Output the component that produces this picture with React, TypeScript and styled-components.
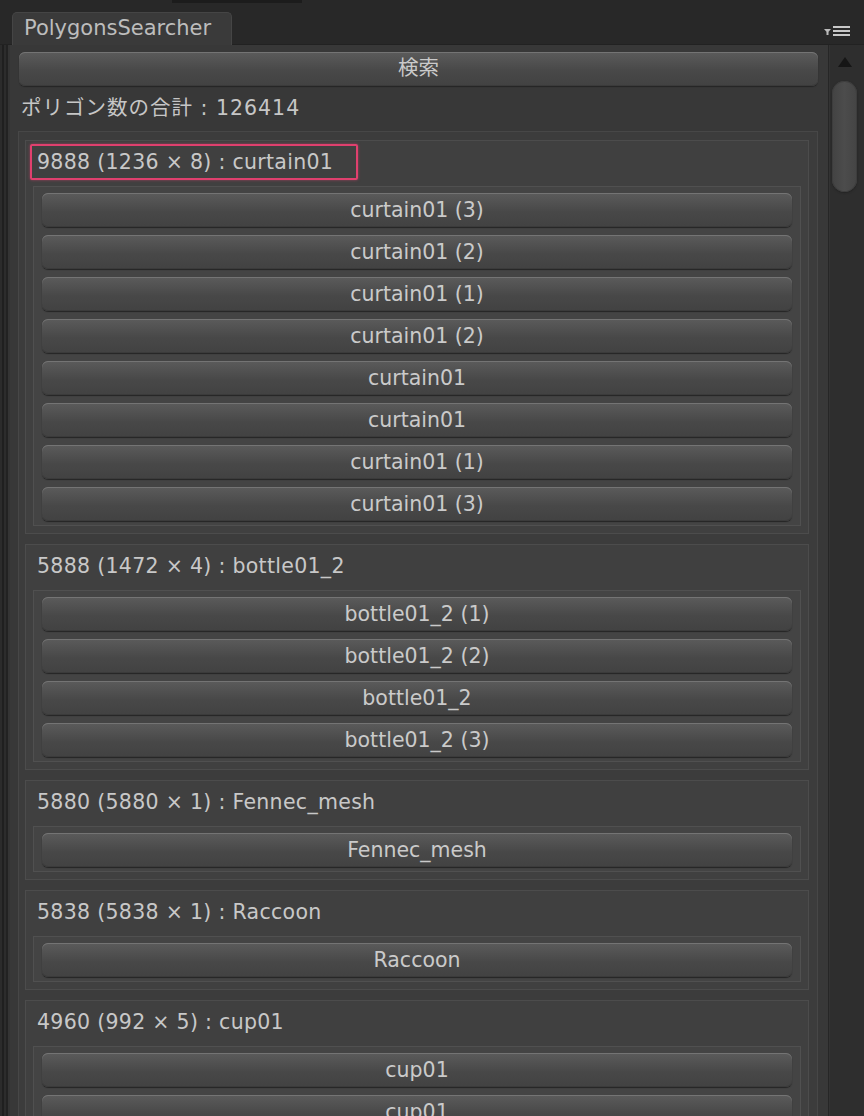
import React from 'react';
import styled, { createGlobalStyle } from 'styled-components';

const GlobalStyle = createGlobalStyle`
  html, body {
    margin: 0;
    padding: 0;
    background: #282828;
  }
  body {
    font-family: "DejaVu Sans", "Noto Sans CJK JP", sans-serif;
  }
`;

const Window = styled.div`
  width: 864px;
  height: 1116px;
  overflow: hidden;
  display: flex;
  flex-direction: column;
  background: #282828;
  color: #c6c6c6;
  font-size: 20.5px;
`;

const TabBar = styled.div`
  height: 45px;
  flex: none;
  display: flex;
  align-items: flex-end;
  padding-left: 12px;
  padding-right: 12px;
  position: relative;
  box-shadow: inset 0 -1px 0 #222;
`;

const TopNotch = styled.div`
  position: absolute;
  left: 172px;
  top: 0;
  width: 130px;
  height: 3px;
  background: #1c1c1c;
`;

const Tab = styled.div`
  height: 33px;
  width: 220px;
  box-sizing: border-box;
  padding: 3px 0 0 11px;
  background: #3a3a3a;
  border: 1px solid #454545;
  border-bottom: none;
  border-radius: 5px 5px 0 0;
  font-size: 21px;
  color: #bdbdbd;
  white-space: nowrap;
`;

const MenuIcon = styled.svg`
  margin-left: auto;
  margin-bottom: 8px;
`;

const Body = styled.div`
  flex: 1;
  display: flex;
  min-height: 0;
`;

const LeftEdge = styled.div`
  width: 10px;
  flex: none;
  background: linear-gradient(
    to right,
    #2b2b2b 0 2px,
    #1f1f1f 2px 4px,
    #2c2c2c 4px 6px,
    #222 6px 8px,
    #343434 8px 10px
  );
`;

const Main = styled.div`
  flex: 1;
  background: #383838;
  padding: 7px 10px 0 9px;
  display: flex;
  flex-direction: column;
  min-width: 0;
`;

const Button = styled.div<{ $lift?: number }>`
  height: 34px;
  box-sizing: border-box;
  padding-bottom: ${p => p.$lift ?? 0}px;
  border-radius: 6px;
  background: linear-gradient(#5b5b5b, #484848 55%, #424242);
  box-shadow: inset 0 1px 0 #747474, inset 0 -1px 0 #3b3b3b, 0 1px 1px #252525;
  display: flex;
  align-items: center;
  justify-content: center;
  color: #cacaca;
  font-size: 20.5px;
  flex: none;
  white-space: nowrap;
`;

const TotalLabel = styled.div`
  margin: 7px 0 0 2px;
  height: 30px;
  line-height: 30px;
  letter-spacing: 1px;
  white-space: nowrap;
`;

const ScrollContent = styled.div`
  margin-top: 8px;
  margin-left: -1px;
  flex: 1;
  background: #3c3c3c;
  border: 1px solid #474747;
  border-bottom: none;
  padding: 8px 8px 0 6px;
  display: flex;
  flex-direction: column;
  gap: 10px;
`;

const Group = styled.div`
  background: #404040;
  border: 1px solid #4c4c4c;
  padding: 3px 7px 7px 7px;
  display: flex;
  flex-direction: column;
  flex: none;
`;

const Title = styled.div<{ $highlight?: boolean }>`
  height: 36px;
  box-sizing: border-box;
  align-self: flex-start;
  margin-left: -3px;
  padding: 0 23px 0 5px;
  display: flex;
  align-items: center;
  border: 2px solid ${p => (p.$highlight ? '#e0406e' : 'transparent')};
  border-radius: 2px;
  box-shadow: ${p => (p.$highlight ? '0 0 3px rgba(224,64,110,0.6)' : 'none')};
  color: #c8c8c8;
  letter-spacing: 0.3px;
  white-space: nowrap;
`;

const ButtonList = styled.div`
  margin-top: 6px;
  background: #444;
  border: 1px solid #505050;
  padding: 6px 8px 4px 8px;
  display: flex;
  flex-direction: column;
  gap: 8px;
`;

const Scrollbar = styled.div`
  width: 36px;
  flex: none;
  background: #2e2e2e;
  box-shadow: inset 1px 0 0 #262626, inset 2px 0 0 #333;
  display: flex;
  flex-direction: column;
  align-items: center;
  padding-top: 8px;
  box-sizing: border-box;
`;

const ArrowUp = styled.div`
  width: 0;
  height: 0;
  border-left: 7px solid transparent;
  border-right: 7px solid transparent;
  border-bottom: 10px solid #161616;
  margin: 4px 2px 0 0;
`;

const Thumb = styled.div`
  margin-top: 14px;
  margin-right: 3px;
  width: 25px;
  height: 111px;
  border-radius: 13px;
  background: linear-gradient(to right, #434343, #4c4c4c 50%, #444);
  box-shadow: inset 0 0 0 1px #3d3d3d, 0 1px 2px #222;
`;

const groups = [
  {
    title: '9888 (1236 × 8) : curtain01',
    highlight: true,
    items: [
      'curtain01 (3)',
      'curtain01 (2)',
      'curtain01 (1)',
      'curtain01 (2)',
      'curtain01',
      'curtain01',
      'curtain01 (1)',
      'curtain01 (3)',
    ],
  },
  {
    title: '5888 (1472 × 4) : bottle01_2',
    items: ['bottle01_2 (1)', 'bottle01_2 (2)', 'bottle01_2', 'bottle01_2 (3)'],
  },
  { title: '5880 (5880 × 1) : Fennec_mesh', items: ['Fennec_mesh'] },
  { title: '5838 (5838 × 1) : Raccoon', items: ['Raccoon'] },
  { title: '4960 (992 × 5) : cup01', items: ['cup01', 'cup01', 'cup01', 'cup01', 'cup01'] },
];

export default function App() {
  return (
    <Window>
      <GlobalStyle />
      <TabBar>
        <TopNotch />
        <Tab>PolygonsSearcher</Tab>
        <MenuIcon width="28" height="12" viewBox="0 0 28 12">
          <polygon points="0,4 7,4 3.5,8" fill="#bbb" />
          <rect x="2.5" y="7" width="2" height="3" fill="#bbb" />
          <rect x="9" y="1" width="17" height="2" fill="#c8c8c8" />
          <rect x="9" y="5" width="17" height="2" fill="#c8c8c8" />
          <rect x="9" y="9" width="17" height="2" fill="#c8c8c8" />
        </MenuIcon>
      </TabBar>
      <Body>
        <LeftEdge />
        <Main>
          <Button $lift={6}>検索</Button>
          <TotalLabel>ポリゴン数の合計 : 126414</TotalLabel>
          <ScrollContent>
            {groups.map((g, i) => (
              <Group key={i}>
                <Title $highlight={g.highlight}>{g.title}</Title>
                <ButtonList>
                  {g.items.map((it, j) => (
                    <Button key={j}>{it}</Button>
                  ))}
                </ButtonList>
              </Group>
            ))}
          </ScrollContent>
        </Main>
        <Scrollbar>
          <ArrowUp />
          <Thumb />
        </Scrollbar>
      </Body>
    </Window>
  );
}
